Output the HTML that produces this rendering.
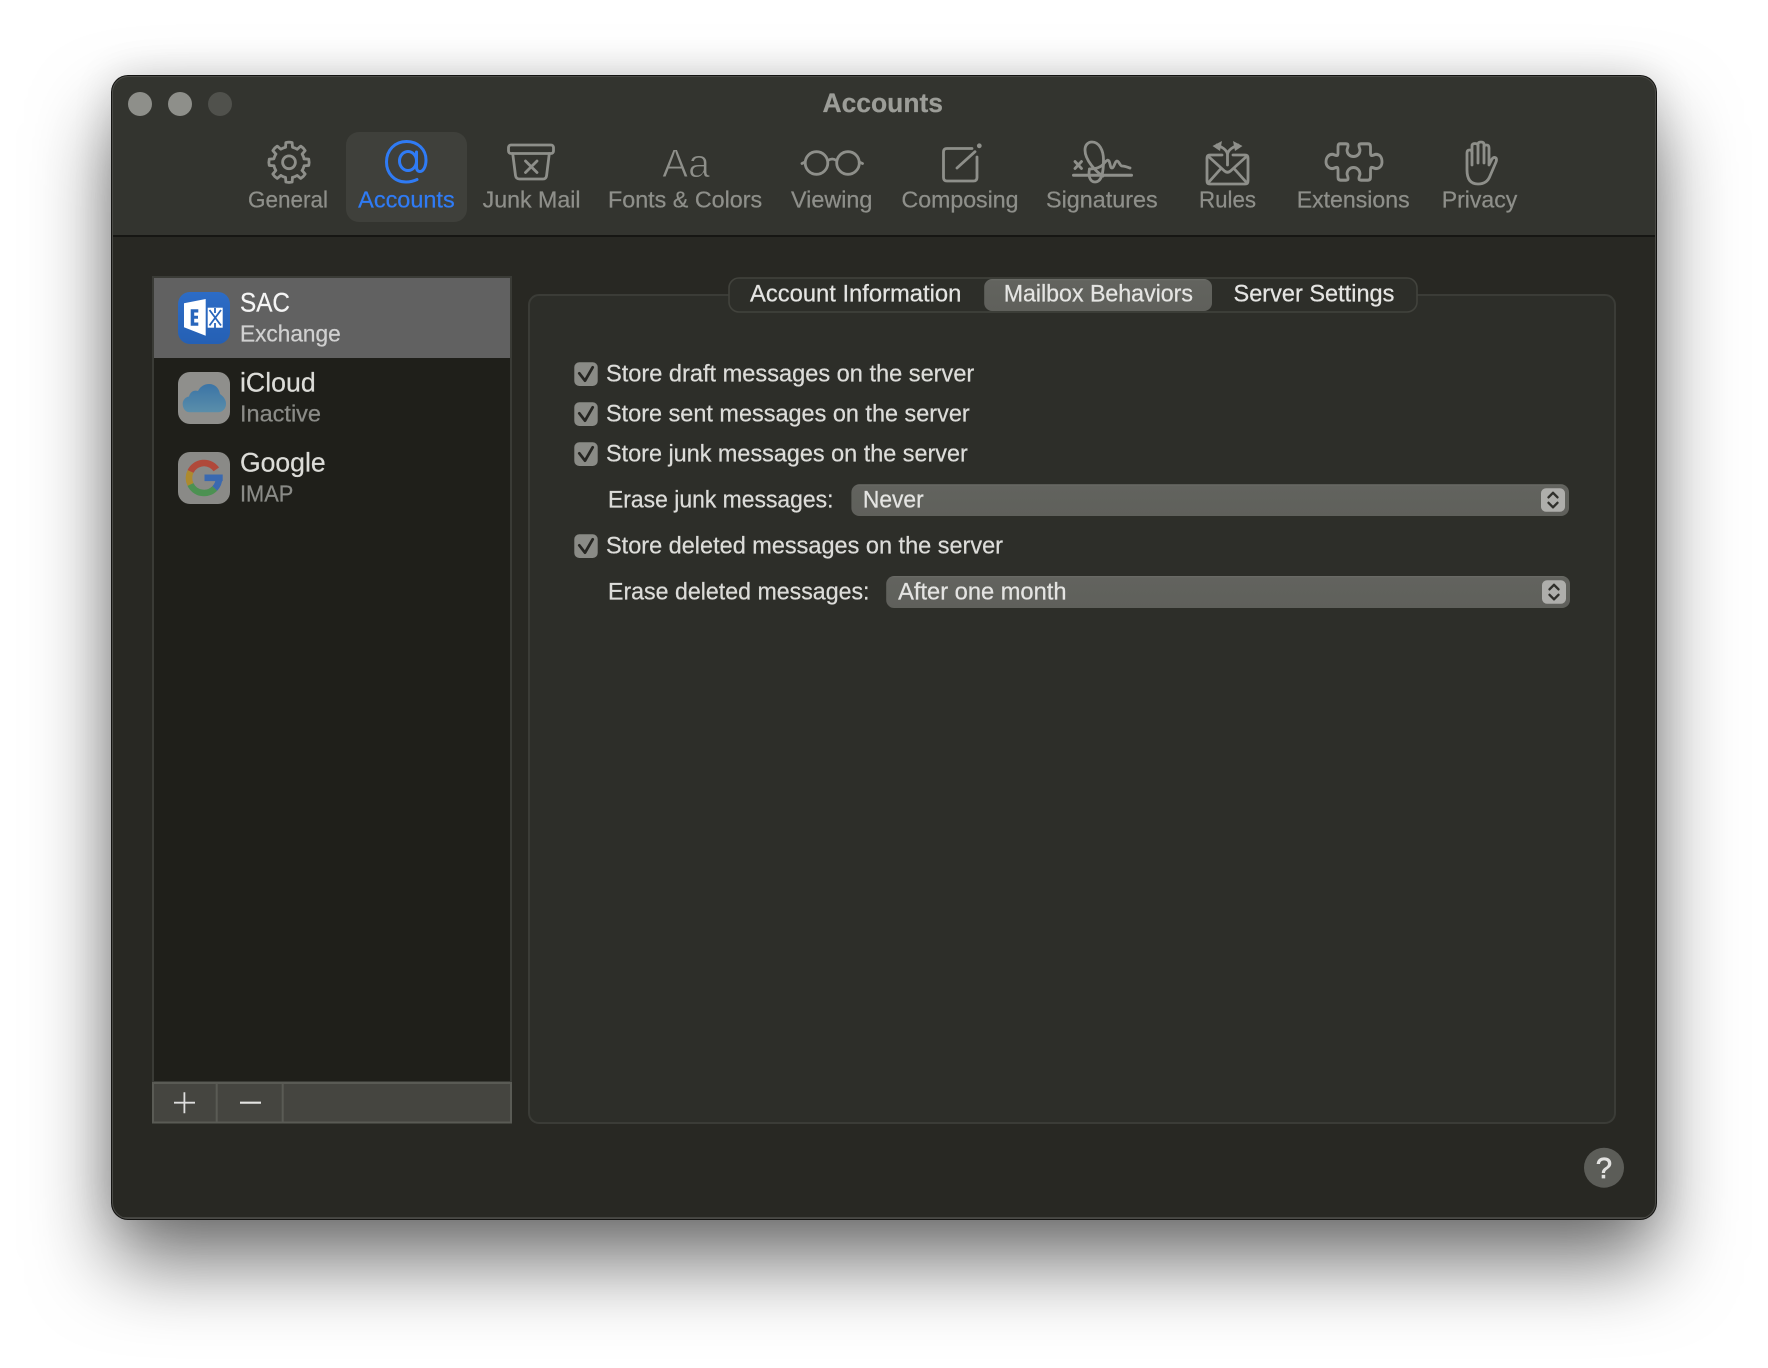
<!DOCTYPE html>
<html lang="en">
<head>
<meta charset="utf-8">
<title>Accounts</title>
<style>
html,body{margin:0;padding:0;background:#fff;width:1768px;height:1368px;overflow:hidden}
#win{position:absolute;left:112px;top:76px;width:1544px;height:1143px;border-radius:16px;background:#282823;box-shadow:0 0 0 1px #141412,0 44px 80px rgba(0,0,0,.55),0 0 40px rgba(0,0,0,.14)}
svg{position:absolute;left:0;top:0}
text{font-family:"Liberation Sans",sans-serif;stroke-width:.25px;paint-order:stroke}
.tb{font-size:23px;fill:#8e8f8a;stroke:#8e8f8a}
.n{font-size:26.5px;fill:#dcdcd8;stroke:#dcdcd8}
.s{font-size:23px;fill:#8a8b87;stroke:#8a8b87}
.b{font-size:24px;fill:#dcdcd9;stroke:#dcdcd9}
.w{fill:#e4e4e2;stroke:#e4e4e2}
.ic{fill:none;stroke:#8e8f8a;stroke-width:2.8;stroke-linecap:round;stroke-linejoin:round}
</style>
</head>
<body>
<div id="win"></div>
<svg width="1768" height="1368" viewBox="0 0 1768 1368" xmlns="http://www.w3.org/2000/svg">
<defs>
<clipPath id="wc"><rect x="112" y="76" width="1544" height="1143" rx="16"/></clipPath>
<linearGradient id="ex" x1="0" y1="0" x2="0" y2="1"><stop offset="0" stop-color="#2d6cc6"/><stop offset="1" stop-color="#2560b4"/></linearGradient>
<linearGradient id="cl" x1="0" y1="0" x2="0" y2="1"><stop offset="0" stop-color="#3b74a6"/><stop offset="1" stop-color="#5a8eaa"/></linearGradient>
<linearGradient id="sel" x1="0" y1="0" x2="0" y2="1"><stop offset="0" stop-color="#6c6d68"/><stop offset=".06" stop-color="#62635e"/><stop offset="1" stop-color="#5f605b"/></linearGradient>
<path id="tooth" d="M-3.49-15.1L-3.13-19.75Q0-20.5 3.13-19.75L3.49-15.1A15.5 15.5 0 0 1 8.21-13.14"/>
<g id="chk">
<rect x="0" y="0" width="23.4" height="23.7" rx="5" fill="#8a8b86"/>
<path d="M5 11L10.7 18.4L18.4 5" fill="none" stroke="#262622" stroke-width="2.8" stroke-linecap="round" stroke-linejoin="round"/>
</g>
<g id="knob">
<rect x="0" y="0" width="24" height="23.4" rx="5" fill="#aeaeab"/>
<path d="M7.5 9L12 4.5L16.5 9M7.5 14.5L12 19L16.5 14.5" fill="none" stroke="#2f2f2b" stroke-width="2.4" stroke-linecap="round" stroke-linejoin="round"/>
</g>
</defs>

<g clip-path="url(#wc)">
<rect x="112" y="76" width="1544" height="160" fill="#33342f"/>
<rect x="112" y="235" width="1544" height="2" fill="#161613"/>
<rect x="112" y="237" width="1544" height="982" fill="#282823"/>
<rect x="112" y="1217" width="1544" height="2" fill="#444440"/>
<rect x="112.5" y="76.5" width="1543" height="1142" rx="16" fill="none" stroke="#4a4a46" stroke-width="1"/>
</g>

<!-- traffic lights -->
<circle cx="140" cy="104" r="12" fill="#8e8f8a"/>
<circle cx="180" cy="104" r="12" fill="#8e8f8a"/>
<circle cx="220" cy="104" r="12" fill="#50514c"/>

<text x="822.5" y="112" font-size="27" font-weight="700" style="fill:#9c9d98;stroke:#9c9d98" textLength="120.5" lengthAdjust="spacingAndGlyphs">Accounts</text>

<!-- selected toolbar tile -->
<rect x="346" y="132" width="121" height="90" rx="13" fill="#3f403b"/>

<!-- gear -->
<g class="ic" transform="translate(289 162.3)">
<use href="#tooth"/>
<use href="#tooth" transform="rotate(45)"/>
<use href="#tooth" transform="rotate(90)"/>
<use href="#tooth" transform="rotate(135)"/>
<use href="#tooth" transform="rotate(180)"/>
<use href="#tooth" transform="rotate(225)"/>
<use href="#tooth" transform="rotate(270)"/>
<use href="#tooth" transform="rotate(315)"/>
<circle r="6.4"/>
</g>

<!-- at -->
<g fill="none" stroke="#2f7bf5" stroke-width="3" stroke-linecap="round">
<path d="M417 179.5C413 181.5 410 182 406 182C394 182 386.5 173 386.5 162C386.5 150 395 141.5 406.5 141.5C418 141.5 426 149.5 426 160C426 167 423 171.5 420 171.5C417.5 171.5 416.5 169.5 416.5 167L416.5 152"/>
<ellipse cx="408" cy="161" rx="8.5" ry="9.5"/>
</g>

<!-- junk -->
<g class="ic">
<rect x="508.5" y="145" width="45" height="8.5" rx="2.5"/>
<path d="M512.7 153.5L515.5 175.5Q516 179 519.5 179H543Q546.2 179 546.6 175.5L549.3 153.5"/>
<path d="M525.5 161L537 172.5M537 161L525.5 172.5"/>
</g>

<!-- Aa -->
<text x="662" y="177" font-size="40" style="fill:#8e8f8a;stroke:#33342f;stroke-width:1px;paint-order:normal" textLength="48" lengthAdjust="spacingAndGlyphs">Aa</text>

<!-- glasses -->
<g class="ic">
<circle cx="816.5" cy="163" r="11.3"/>
<circle cx="848" cy="163" r="11.3"/>
<path d="M828 160.5Q832.2 157.5 836.5 160.5M805 162L802 163.5M859.2 162L862.5 163.5"/>
</g>

<!-- compose -->
<g class="ic">
<path d="M972 148.5H947Q943.5 148.5 943.5 152V177.5Q943.5 181 947 181H973.5Q977 181 977 177.5V157"/>
<path d="M957 168L975 151.7"/>
<circle cx="979.3" cy="145.8" r="1" fill="#8e8f8a"/>
</g>

<!-- signature -->
<g class="ic">
<path d="M1075 161.5L1081.5 168.5M1081.5 161.5L1075 168.5"/>
<path d="M1073.5 175.2H1131.5" stroke-width="3"/>
<path d="M1103 176C1096 172 1085 160 1085 150C1085 145 1088 142 1092 142C1099 142 1103.5 150 1103.5 160C1103.5 172 1102 182 1095 182C1090 182 1088 176 1089.5 169"/>
<path d="M1089.5 169C1094 169 1100 168 1103.5 164C1106 161 1108 159 1109 161C1110.5 164 1110 168 1112 168C1114 168 1115 161 1117 161C1119 161 1120 166 1122 166C1125 166 1127 167 1130 168"/>
</g>

<!-- rules -->
<g class="ic" stroke-width="2.8">
<path d="M1222 155H1210Q1207 155 1207 158V181Q1207 184 1210 184H1245Q1248 184 1248 181V158Q1248 155 1245 155H1233"/>
<path d="M1208.5 156.5L1224.5 171Q1227.5 173.5 1230.5 171L1246.5 156.5"/>
<path d="M1208.5 182.5L1221 168.5M1246.5 182.5L1234 168.5"/>
<path d="M1227.5 165V155C1227.5 150 1222 147 1217 145M1227.5 155C1227.5 150 1233 147 1238 145"/>
</g>
<path d="M1212.5 146L1222 141L1220 151ZM1242.5 146L1233 141L1235 151Z" fill="#8e8f8a"/>

<!-- puzzle -->
<path class="ic" transform="translate(0 -16.2) scale(1 1.1)" d="M1340 145.5H1346C1350 145.5 1347 150 1347 151C1347 155 1350 157 1353.5 157C1357 157 1360 155 1360 151C1360 150 1357 145.5 1361 145.5H1368Q1370.5 145.5 1370.5 148V154C1370.5 158 1374 155 1376 155C1380 155 1382 158 1382 162C1382 165 1380 168 1376 168C1374 168 1370.5 165 1370.5 169V176Q1370.5 178.5 1368 178.5H1361C1357 178.5 1360 174 1360 173C1360 169.5 1357 167 1353.5 167C1350 167 1347 169.5 1347 173C1347 174 1350 178.5 1346 178.5H1340.5Q1338 178.5 1338 176V169C1338 165 1334.5 168 1332.5 168C1328.5 168 1326 165 1326 162C1326 158 1328.5 155 1332.5 155C1334.5 155 1338 158 1338 154V148Q1338 145.5 1340 145.5Z"/>

<!-- hand -->
<g class="ic">
<path d="M1467 170V153Q1467 150 1469.5 150Q1472 150 1472 153V146Q1472 143.5 1475 143.5Q1478 143.5 1478 146V144.5Q1478 142 1481 142Q1484 142 1484 144.5V147Q1484 145 1486.5 145Q1489 145 1489 148V165L1492 159Q1494 156.5 1496 158Q1497 159.5 1496 162L1490 176Q1487 184 1478 184Q1467 184 1467 170Z"/>
<path d="M1472 153V165M1478 146V163M1484 147V163"/>
</g>

<!-- toolbar labels -->
<text class="tb" x="248" y="207.5" textLength="80" lengthAdjust="spacingAndGlyphs">General</text>
<text class="tb" x="358.2" y="207.5" textLength="96.5" lengthAdjust="spacingAndGlyphs" style="fill:#2f7bf5;stroke:#2f7bf5">Accounts</text>
<text class="tb" x="482.6" y="207.5" textLength="98" lengthAdjust="spacingAndGlyphs">Junk Mail</text>
<text class="tb" x="608" y="207.5" textLength="154.2" lengthAdjust="spacingAndGlyphs">Fonts &amp; Colors</text>
<text class="tb" x="791" y="207.5" textLength="81.4" lengthAdjust="spacingAndGlyphs">Viewing</text>
<text class="tb" x="901.5" y="207.5" textLength="117" lengthAdjust="spacingAndGlyphs">Composing</text>
<text class="tb" x="1046" y="207.5" textLength="111.7" lengthAdjust="spacingAndGlyphs">Signatures</text>
<text class="tb" x="1199" y="207.5" textLength="57" lengthAdjust="spacingAndGlyphs">Rules</text>
<text class="tb" x="1296.7" y="207.5" textLength="113" lengthAdjust="spacingAndGlyphs">Extensions</text>
<text class="tb" x="1441.7" y="207.5" textLength="75.6" lengthAdjust="spacingAndGlyphs">Privacy</text>

<!-- sidebar -->
<rect x="153" y="277" width="358" height="805" fill="#1f1f1a" stroke="#3a3b36" stroke-width="2"/>
<rect x="154" y="278" width="356" height="80" fill="#616161"/>

<!-- Exchange icon -->
<rect x="178" y="292" width="52" height="52" rx="12" fill="url(#ex)"/>
<path d="M184 303.3L205.7 299V335.7L184 327.3Z" fill="#fff"/>
<path d="M190.7 309.3H198.3V312.5H194.2V315.8H198V318.8H194.2V322.5H198.3V325.7H190.7Z" fill="#2866bc"/>
<rect x="207.7" y="307.7" width="15" height="20" fill="#fff"/>
<path d="M209.5 310L221 325.5M221 310L209.5 325.5M215 308V313M215 323V328" stroke="#2866bc" stroke-width="1.8" fill="none"/>

<!-- iCloud icon -->
<rect x="178" y="372" width="52" height="52" rx="12" fill="#8f8f8c"/>
<path d="M190 412.3C185 412.3 182.7 408 182.7 404C182.7 400 185.5 397 189 396.5C190 392 194 389.5 198 391C200.5 386 205 384 209 384C215 384 219 388 220 394C224 397 226 400 226 404C226 409 222 412.3 218 412.3Z" fill="url(#cl)"/>

<!-- Google icon -->
<rect x="178" y="452" width="52" height="52" rx="12" fill="#8a8a87"/>
<g fill="none" stroke-width="6.6">
<path d="M216.3 469.4A15 15 0 0 0 190.5 471.5" stroke="#b0493a"/>
<path d="M190.5 471.5A15 15 0 0 0 190.5 484.5" stroke="#ad8a2e"/>
<path d="M190.5 484.5A15 15 0 0 0 214.8 488.4" stroke="#4c9152"/>
<path d="M214.8 488.4A15 15 0 0 0 219 478" stroke="#3a69b0"/>
</g>
<rect x="204.5" y="474.5" width="18.2" height="6.6" fill="#3a69b0"/>

<!-- list text -->
<text class="n" x="240" y="311.7" textLength="50" lengthAdjust="spacingAndGlyphs" style="fill:#f4f4f4;stroke:#f4f4f4">SAC</text>
<text class="s" x="240" y="341.7" textLength="100.7" lengthAdjust="spacingAndGlyphs" style="fill:#d0d0d0;stroke:#d0d0d0">Exchange</text>
<text class="n" x="240" y="391.7" textLength="75.7" lengthAdjust="spacingAndGlyphs">iCloud</text>
<text class="s" x="240" y="421.7" textLength="81" lengthAdjust="spacingAndGlyphs">Inactive</text>
<text class="n" x="240" y="471.7" textLength="85.6" lengthAdjust="spacingAndGlyphs">Google</text>
<text class="s" x="240" y="501.7" textLength="53.3" lengthAdjust="spacingAndGlyphs">IMAP</text>

<!-- sidebar bottom bar -->
<rect x="153" y="1083" width="358" height="39.5" fill="#454540" stroke="#5a5b55" stroke-width="2"/>
<path d="M216.7 1083V1122M282.7 1083V1122" stroke="#5a5b55" stroke-width="2"/>
<path d="M174 1102.7H195M184.4 1092.2V1113.2" stroke="#dedede" stroke-width="1.8"/>
<path d="M240 1102.7H261" stroke="#e4e4e2" stroke-width="2.2"/>

<!-- tab box -->
<rect x="529" y="295" width="1086" height="828" rx="10" fill="#2d2e29" stroke="#3b3c37" stroke-width="2"/>

<!-- segmented control -->
<rect x="729" y="278" width="688" height="34" rx="10" fill="#2d2e29" stroke="#42433d" stroke-width="1.6"/>
<rect x="984.2" y="279" width="227.8" height="32" rx="8" fill="url(#sel)"/>
<text class="b w" x="750" y="301.7" textLength="211.3" lengthAdjust="spacingAndGlyphs">Account Information</text>
<text class="b w" x="1003.7" y="301.7" textLength="189.3" lengthAdjust="spacingAndGlyphs">Mailbox Behaviors</text>
<text class="b w" x="1233.5" y="301.7" textLength="160.9" lengthAdjust="spacingAndGlyphs">Server Settings</text>

<!-- options -->
<use href="#chk" x="574.3" y="362.3"/>
<text class="b" x="606" y="381.7" textLength="368.3" lengthAdjust="spacingAndGlyphs">Store draft messages on the server</text>
<use href="#chk" x="574.3" y="402.3"/>
<text class="b" x="606" y="421.7" textLength="363.7" lengthAdjust="spacingAndGlyphs">Store sent messages on the server</text>
<use href="#chk" x="574.3" y="442.3"/>
<text class="b" x="606" y="461.7" textLength="361.8" lengthAdjust="spacingAndGlyphs">Store junk messages on the server</text>

<text class="b" x="608" y="507.7" textLength="225.5" lengthAdjust="spacingAndGlyphs">Erase junk messages:</text>
<rect x="851.4" y="484.3" width="717.6" height="31.7" rx="8" fill="url(#sel)"/>
<text class="b w" x="862.9" y="507.7" textLength="60.8" lengthAdjust="spacingAndGlyphs">Never</text>
<use href="#knob" x="1541" y="488.3"/>

<use href="#chk" x="574.3" y="534.3"/>
<text class="b" x="606" y="553.7" textLength="397" lengthAdjust="spacingAndGlyphs">Store deleted messages on the server</text>

<text class="b" x="608" y="599.7" textLength="261.5" lengthAdjust="spacingAndGlyphs">Erase deleted messages:</text>
<rect x="886.2" y="576" width="683.8" height="32" rx="8" fill="url(#sel)"/>
<text class="b w" x="898.1" y="599.7" textLength="168.4" lengthAdjust="spacingAndGlyphs">After one month</text>
<use href="#knob" x="1542" y="580.3"/>

<!-- help -->
<circle cx="1604" cy="1167.7" r="20" fill="#5c5d58"/>
<text x="1604" y="1178" text-anchor="middle" font-size="29" style="fill:#e2e2e0;stroke:#e2e2e0;stroke-width:.7px">?</text>
</svg>
</body>
</html>
